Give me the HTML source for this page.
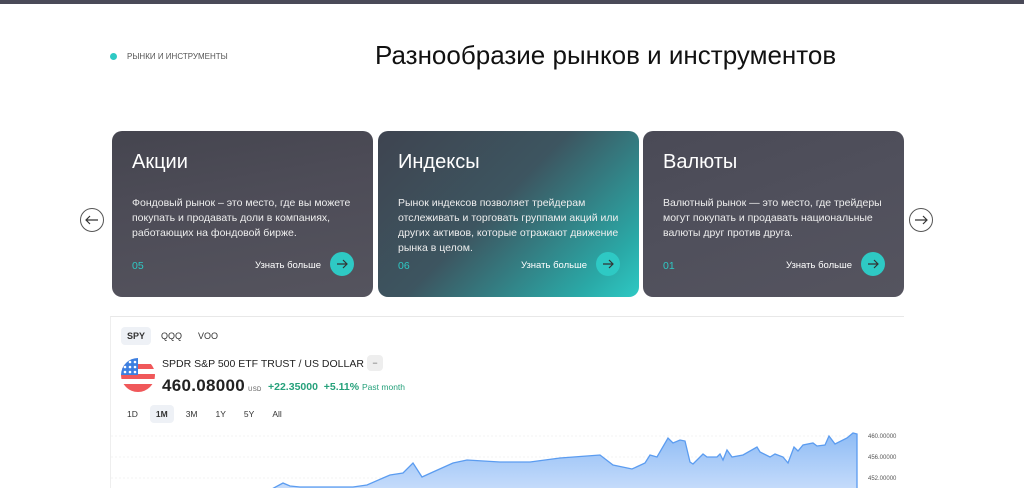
<!DOCTYPE html>
<html><head><meta charset="utf-8"><style>
*{margin:0;padding:0;box-sizing:border-box}
body{width:1024px;height:488px;overflow:hidden;background:#fff;font-family:"Liberation Sans",sans-serif;position:relative}
.topbar{position:absolute;left:0;top:0;width:1024px;height:4px;background:#4a4a58}
.tag{position:absolute;left:110px;top:52px;font-size:8px;color:#555;display:flex;align-items:center;gap:10px}
.tag i{width:7px;height:7px;border-radius:50%;background:#2ec9c4;display:block}
h1{position:absolute;left:375px;top:40px;font-size:26px;font-weight:400;color:#111}
.card{position:absolute;top:131px;width:261px;height:166px;border-radius:10px;color:#fff;padding:20px 20px;overflow:hidden}
.card h2{font-size:20px;font-weight:400;margin-top:0}
.card p{font-size:10.5px;line-height:15px;margin-top:22px;color:#eee}
.num{position:absolute;left:20px;top:129px;font-size:10.5px;color:#2ec9c4}
.more{position:absolute;right:52px;top:129px;font-size:9.5px}
.go{position:absolute;right:19px;top:121px;width:24px;height:24px;border-radius:50%;background:#2ec9c4;display:flex;align-items:center;justify-content:center}
.nav{position:absolute;top:208px;width:24px;height:24px;border-radius:50%;border:1px solid #555;display:flex;align-items:center;justify-content:center;background:#fff}
.chart{position:absolute;left:110px;top:316px;width:794px;height:172px;border-top:1px solid #e8e8e8;border-left:1px solid #eee}
.tabs{position:absolute;left:10px;top:10px;display:flex;gap:4px;font-size:9px;color:#333}
.tabs span{padding:4px 6px;border-radius:4px}
.sel{background:#eef1f6;font-weight:bold}
</style></head><body>
<div class="topbar"></div>
<div class="tag"><i></i>РЫНКИ И ИНСТРУМЕНТЫ</div>
<h1>Разнообразие рынков и инструментов</h1>

<div class="nav" style="left:80px"><svg width="14" height="10" viewBox="0 0 14 10"><path d="M13 5H1M5 1L1 5l4 4" stroke="#333" fill="none" stroke-width="1.2"/></svg></div>
<div class="nav" style="left:909px"><svg width="14" height="10" viewBox="0 0 14 10"><path d="M1 5h12M9 1l4 4-4 4" stroke="#333" fill="none" stroke-width="1.2"/></svg></div>

<div class="card" style="left:112px;background:linear-gradient(170deg,#45454f 0%,#4d4c57 40%,#55545e 100%)">
<h2>Акции</h2><p>Фондовый рынок – это место, где вы можете покупать и продавать доли в компаниях, работающих на фондовой бирже.</p>
<div class="num">05</div><div class="more">Узнать больше</div>
<div class="go"><svg width="12" height="10" viewBox="0 0 12 10"><path d="M1 5h10M7 1l4 4-4 4" stroke="#333" fill="none" stroke-width="1.2"/></svg></div></div>

<div class="card" style="left:378px;background:linear-gradient(135deg,#3e4450 0%,#3d5560 45%,#2aa8a6 85%,#2ec9c4 100%)">
<h2>Индексы</h2><p>Рынок индексов позволяет трейдерам отслеживать и торговать группами акций или других активов, которые отражают движение рынка в целом.</p>
<div class="num">06</div><div class="more">Узнать больше</div>
<div class="go"><svg width="12" height="10" viewBox="0 0 12 10"><path d="M1 5h10M7 1l4 4-4 4" stroke="#333" fill="none" stroke-width="1.2"/></svg></div></div>

<div class="card" style="left:643px;background:linear-gradient(160deg,#4a4a56 0%,#50505c 50%,#55545f 100%)">
<h2>Валюты</h2><p>Валютный рынок — это место, где трейдеры могут покупать и продавать национальные валюты друг против друга.</p>
<div class="num">01</div><div class="more">Узнать больше</div>
<div class="go"><svg width="12" height="10" viewBox="0 0 12 10"><path d="M1 5h10M7 1l4 4-4 4" stroke="#333" fill="none" stroke-width="1.2"/></svg></div></div>

<div class="chart">
<div class="tabs"><span class="sel">SPY</span><span>QQQ</span><span>VOO</span></div>
<svg style="position:absolute;left:9px;top:40px" width="36" height="36" viewBox="0 0 36 36"><defs><clipPath id="c"><circle cx="18" cy="18" r="17"/></clipPath></defs><g clip-path="url(#c)"><rect width="36" height="36" fill="#fff"/><rect y="7" width="36" height="5" fill="#f0585a"/><rect y="17" width="36" height="5" fill="#f0585a"/><rect y="27" width="36" height="9" fill="#f0585a"/><rect width="18" height="18" fill="#3d7fe0"/><g fill="#fff"><circle cx="5" cy="5" r="1.3"/><circle cx="10" cy="5" r="1.3"/><circle cx="15" cy="5" r="1.3"/><circle cx="5" cy="10" r="1.3"/><circle cx="10" cy="10" r="1.3"/><circle cx="15" cy="10" r="1.3"/><circle cx="5" cy="15" r="1.3"/><circle cx="10" cy="15" r="1.3"/><circle cx="15" cy="15" r="1.3"/></g></g></svg>
<div style="position:absolute;left:51px;top:41px;font-size:10.5px;color:#222">SPDR S&amp;P 500 ETF TRUST / US DOLLAR</div>
<div style="position:absolute;left:256px;top:38px;width:16px;height:16px;background:#eee;border-radius:4px;font-size:9px;text-align:center;line-height:16px;color:#666">−</div>
<div style="position:absolute;left:51px;top:59px;font-size:17px;color:#222;font-weight:bold;letter-spacing:.3px">460.08000<span style="font-size:6px;font-weight:normal;color:#555;margin-left:3px">USD</span></div>
<div style="position:absolute;left:157px;top:64px;font-size:10.5px;color:#26a17b;font-weight:bold">+22.35000 &nbsp;+5.11% <span style="font-size:8.5px;font-weight:normal">Past month</span></div>
<div class="tabs" style="top:88px;gap:6px;font-size:8.5px"><span>1D</span><span class="sel">1M</span><span>3M</span><span>1Y</span><span>5Y</span><span>All</span></div>
</div>
<svg style="position:absolute;left:0;top:0" width="1024" height="488">
<defs><linearGradient id="g" x1="0" y1="0" x2="0" y2="1"><stop offset="0" stop-color="#8fbcf5"/><stop offset="1" stop-color="#c6dcfb"/></linearGradient></defs>
<line x1="111" y1="436" x2="857" y2="436" stroke="#f3f3f3" stroke-dasharray="2 2"/>
<line x1="111" y1="457" x2="857" y2="457" stroke="#f3f3f3" stroke-dasharray="2 2"/>
<line x1="111" y1="478" x2="857" y2="478" stroke="#f3f3f3" stroke-dasharray="2 2"/>
<path d="M270 490L283 483 290 486 300 487 353 487 367 485 383 478 390 475 403 473 413 463 422 477 433 472 453 463 467 460 500 462 530 462 560 458 600 455 613 465 632 469 645 463 650 455 657 457 668 438 673 443 680 440 685 441 690 462 693 464 703 454 707 457 717 457 720 454 723 460 727 450 732 457 743 455 757 447 760 452 770 457 775 454 783 457 788 463 794 447 798 451 803 445 813 443 817 446 825 445 829 436 835 444 847 438 853 433 857 434 857 490Z" fill="url(#g)" stroke="#5b9cf0" stroke-width="1.3"/>
<g font-size="6px" fill="#555" font-family="Liberation Sans"><text x="868" y="438">460.00000</text><text x="868" y="459">456.00000</text><text x="868" y="480">452.00000</text></g>
</svg>
</body></html>
